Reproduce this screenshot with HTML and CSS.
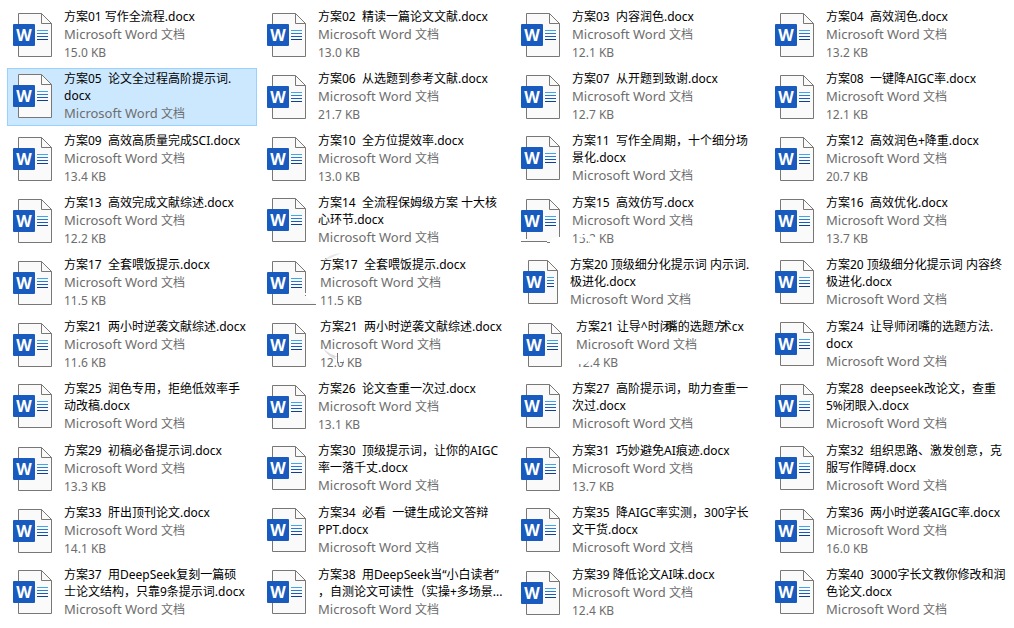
FILE: index.html
```html
<!DOCTYPE html>
<html lang="zh">
<head>
    <meta charset="UTF-8">
    <meta name="viewport" content="width=device-width, initial-scale=1.0">
    <title>方案文档</title>
    <link rel="stylesheet" href="styles.css">
</head>
<body>
    <!-- 图标定义 -->
    <svg class="defs" width="0" height="0" aria-hidden="true">
        <symbol id="mark" viewBox="0 0 40 46">
            <rect y="11" width="22" height="22" rx="1" fill="#185abd"/>
            <text class="letter" x="11" y="28" text-anchor="middle">W</text>
        </symbol>
        <symbol id="lines" viewBox="0 0 11 11">
            <path d="M0 .5H11" stroke="#41a5ee"/>
            <path d="M0 3.5H11" stroke="#2b7cd3"/>
            <path d="M0 6.5H11" stroke="#185abd"/>
            <path d="M0 9.5H11" stroke="#103f91"/>
        </symbol>
        <symbol id="word" viewBox="0 0 40 46">
            <path class="paper" d="M5.5 .5H28.5L38.5 10.5V43.5H5.5Z"/>
            <path class="fold" d="M28.5 .5V10.5H38.5"/>
            <use href="#lines" x="24" y="17" width="11" height="11"/>
            <use href="#mark" width="40" height="46"/>
        </symbol>
        <symbol id="word-narrow" viewBox="0 0 40 46">
            <path class="paper" d="M7.5 .5H26.5L36.5 10.5V43.5H7.5Z"/>
            <path class="fold" d="M26.5 .5V10.5H36.5"/>
            <path d="M26 17.5H33" stroke="#41a5ee"/>
            <path d="M26 20.5H33" stroke="#2b7cd3"/>
            <path d="M26 23.5H33" stroke="#185abd"/>
            <path d="M26 26.5H33" stroke="#103f91"/>
            <use href="#mark" x="2" width="40" height="46"/>
        </symbol>
        <symbol id="word-erased" viewBox="0 0 40 46">
            <path class="sheet" d="M5.5 .5H28.5L38.5 10.5V38Q32 37 29 42H5.5Z"/>
            <path class="fold" d="M5.5 40V.5H28.5L38.5 10.5V38M28.5 .5V10.5H38.5M0 42.5H26M26 43.5H29"/>
            <use href="#lines" x="24" y="17" width="11" height="11"/>
            <use href="#mark" width="40" height="46"/>
        </symbol>
        <symbol id="word-torn" viewBox="0 0 50 46">
            <path class="sheet" d="M5.5 .5H28.5L38.5 10.5V36L49 43H5.5Z"/>
            <path class="fold" d="M49 43.5H5.5V.5H28.5L38.5 10.5V32M38.5 34V35M28.5 .5V10.5H38.5"/>
            <use href="#lines" x="24" y="17" width="11" height="11"/>
            <use href="#mark" width="40" height="46"/>
        </symbol>
        <symbol id="word-shifted" viewBox="0 0 42 46">
            <path class="paper" d="M7.5 .5H30.5L40.5 10.5V43.5H7.5Z"/>
            <path class="fold" d="M30.5 .5V10.5H40.5"/>
            <use href="#lines" x="26" y="17" width="11" height="11"/>
            <use href="#mark" x="2" width="40" height="46"/>
        </symbol>
    </svg>

    <ul class="files">
        <li class="file"><svg class="icon"><use href="#word"/></svg><div class="info"><p class="name">方案01 写作全流程.docx</p><p class="meta"><span class="app">Microsoft Word</span> 文档</p><p class="meta">15.0 KB</p></div></li>
        <li class="file"><svg class="icon"><use href="#word"/></svg><div class="info"><p class="name">方案02  精读一篇论文文献.docx</p><p class="meta"><span class="app">Microsoft Word</span> 文档</p><p class="meta">13.0 KB</p></div></li>
        <li class="file"><svg class="icon"><use href="#word"/></svg><div class="info"><p class="name">方案03  内容润色.docx</p><p class="meta"><span class="app">Microsoft Word</span> 文档</p><p class="meta">12.1 KB</p></div></li>
        <li class="file"><svg class="icon"><use href="#word"/></svg><div class="info"><p class="name">方案04  高效润色.docx</p><p class="meta"><span class="app">Microsoft Word</span> 文档</p><p class="meta">13.2 KB</p></div></li>

        <li class="file two-line selected"><svg class="icon"><use href="#word"/></svg><div class="info"><p class="name">方案05  论文全过程高阶提示词.<br>docx</p><p class="meta"><span class="app">Microsoft Word</span> 文档</p></div></li>
        <li class="file"><svg class="icon"><use href="#word"/></svg><div class="info"><p class="name">方案06  从选题到参考文献.docx</p><p class="meta"><span class="app">Microsoft Word</span> 文档</p><p class="meta">21.7 KB</p></div></li>
        <li class="file"><svg class="icon"><use href="#word"/></svg><div class="info"><p class="name">方案07  从开题到致谢.docx</p><p class="meta"><span class="app">Microsoft Word</span> 文档</p><p class="meta">12.7 KB</p></div></li>
        <li class="file"><svg class="icon"><use href="#word"/></svg><div class="info"><p class="name">方案08  一键降AIGC率.docx</p><p class="meta"><span class="app">Microsoft Word</span> 文档</p><p class="meta">12.1 KB</p></div></li>

        <li class="file"><svg class="icon"><use href="#word"/></svg><div class="info"><p class="name">方案09  高效高质量完成SCI.docx</p><p class="meta"><span class="app">Microsoft Word</span> 文档</p><p class="meta">13.4 KB</p></div></li>
        <li class="file"><svg class="icon"><use href="#word"/></svg><div class="info"><p class="name">方案10  全方位提效率.docx</p><p class="meta"><span class="app">Microsoft Word</span> 文档</p><p class="meta">13.0 KB</p></div></li>
        <li class="file two-line"><svg class="icon"><use href="#word"/></svg><div class="info"><p class="name">方案11  写作全周期，十个细分场<br>景化.docx</p><p class="meta"><span class="app">Microsoft Word</span> 文档</p></div></li>
        <li class="file"><svg class="icon"><use href="#word"/></svg><div class="info"><p class="name">方案12  高效润色+降重.docx</p><p class="meta"><span class="app">Microsoft Word</span> 文档</p><p class="meta">20.7 KB</p></div></li>

        <li class="file"><svg class="icon"><use href="#word"/></svg><div class="info"><p class="name">方案13  高效完成文献综述.docx</p><p class="meta"><span class="app">Microsoft Word</span> 文档</p><p class="meta">12.2 KB</p></div></li>
        <li class="file two-line"><svg class="icon"><use href="#word"/></svg><div class="info"><p class="name">方案14  全流程保姆级方案 十大核<br>心环节.docx</p><p class="meta"><span class="app">Microsoft Word</span> 文档</p></div></li>
        <li class="file"><svg class="icon"><use href="#word-erased"/></svg><div class="info"><p class="name">方案15  高效仿写.docx</p><p class="meta"><span class="app">Microsoft Word</span> 文档</p><p class="meta">15.2 KB</p></div>
            <svg class="smudge" viewBox="0 0 250 58" aria-hidden="true"><path d="M62 45L66 41L70 44L67 46ZM75 45H82V53H75Z" fill="#fff"/></svg></li>
        <li class="file"><svg class="icon"><use href="#word"/></svg><div class="info"><p class="name">方案16  高效优化.docx</p><p class="meta"><span class="app">Microsoft Word</span> 文档</p><p class="meta">13.7 KB</p></div></li>

        <li class="file"><svg class="icon"><use href="#word"/></svg><div class="info"><p class="name">方案17  全套喂饭提示.docx</p><p class="meta"><span class="app">Microsoft Word</span> 文档</p><p class="meta">11.5 KB</p></div></li>
        <li class="file"><svg class="icon wide"><use href="#word-torn"/></svg><div class="info"><p class="name">方案17  全套喂饭提示.docx</p><p class="meta"><span class="app">Microsoft Word</span> 文档</p><p class="meta">11.5 KB</p></div>
            <svg class="smudge" viewBox="0 0 250 58" aria-hidden="true"><path d="M62 7Q69 0 80 -1L70 4Z" fill="#e6e6e6"/></svg></li>
        <li class="file two-line"><svg class="icon narrow"><use href="#word-narrow"/></svg><div class="info"><p class="name">方案20 顶级细分化提示词 内示词.<br>极进化.docx</p><p class="meta"><span class="app">Microsoft Word</span> 文档</p></div></li>
        <li class="file two-line"><svg class="icon"><use href="#word"/></svg><div class="info"><p class="name">方案20 顶级细分化提示词 内容终<br>极进化.docx</p><p class="meta"><span class="app">Microsoft Word</span> 文档</p></div></li>

        <li class="file"><svg class="icon"><use href="#word"/></svg><div class="info"><p class="name">方案21  两小时逆袭文献综述.docx</p><p class="meta"><span class="app">Microsoft Word</span> 文档</p><p class="meta">11.6 KB</p></div></li>
        <li class="file"><svg class="icon spaced"><use href="#word"/></svg><div class="info"><p class="name">方案21  两小时逆袭文献综述.docx</p><p class="meta"><span class="app">Microsoft Word</span> 文档</p><p class="meta">12.0 KB</p></div>
            <svg class="smudge" viewBox="0 0 250 58" aria-hidden="true"><path d="M62 32Q68 39 82 42L76 44Q66 40 62 32Z" fill="#ddd"/><path d="M74 41H82V46H76Z" fill="#fff"/><path d="M76.5 37V47M79 46.5H83" fill="none" stroke="#777"/></svg></li>
        <li class="file"><svg class="icon shifted"><use href="#word-shifted"/></svg><div class="info"><p class="name">方案21 让导^时闭<span class="over">嘴</span>的选题方<span class="over">术</span>cx</p><p class="meta"><span class="app">Microsoft Word</span> 文档</p><p class="meta">12.4 KB</p></div>
            <svg class="smudge" viewBox="0 0 250 58" aria-hidden="true"><path d="M60 37Q70 42 76 39V43L71 48H60ZM84 38H104V41H84ZM14 51H110V58H14Z" fill="#fff"/></svg></li>
        <li class="file two-line"><svg class="icon"><use href="#word"/></svg><div class="info"><p class="name">方案24  让导师闭嘴的选题方法.<br>docx</p><p class="meta"><span class="app">Microsoft Word</span> 文档</p></div></li>

        <li class="file two-line"><svg class="icon"><use href="#word"/></svg><div class="info"><p class="name">方案25  润色专用，拒绝低效率手<br>动改稿.docx</p><p class="meta"><span class="app">Microsoft Word</span> 文档</p></div></li>
        <li class="file"><svg class="icon"><use href="#word"/></svg><div class="info"><p class="name">方案26  论文查重一次过.docx</p><p class="meta"><span class="app">Microsoft Word</span> 文档</p><p class="meta">13.1 KB</p></div></li>
        <li class="file two-line"><svg class="icon"><use href="#word"/></svg><div class="info"><p class="name">方案27  高阶提示词，助力查重一<br>次过.docx</p><p class="meta"><span class="app">Microsoft Word</span> 文档</p></div></li>
        <li class="file two-line"><svg class="icon"><use href="#word"/></svg><div class="info"><p class="name">方案28  deepseek改论文，查重<br>5%闭眼入.docx</p><p class="meta"><span class="app">Microsoft Word</span> 文档</p></div></li>

        <li class="file"><svg class="icon"><use href="#word"/></svg><div class="info"><p class="name">方案29  初稿必备提示词.docx</p><p class="meta"><span class="app">Microsoft Word</span> 文档</p><p class="meta">13.3 KB</p></div></li>
        <li class="file two-line"><svg class="icon"><use href="#word"/></svg><div class="info"><p class="name">方案30  顶级提示词，让你的AIGC<br>率一落千丈.docx</p><p class="meta"><span class="app">Microsoft Word</span> 文档</p></div></li>
        <li class="file"><svg class="icon"><use href="#word"/></svg><div class="info"><p class="name">方案31  巧妙避免AI痕迹.docx</p><p class="meta"><span class="app">Microsoft Word</span> 文档</p><p class="meta">13.7 KB</p></div></li>
        <li class="file two-line"><svg class="icon"><use href="#word"/></svg><div class="info"><p class="name">方案32  组织思路、激发创意，克<br>服写作障碍.docx</p><p class="meta"><span class="app">Microsoft Word</span> 文档</p></div></li>

        <li class="file"><svg class="icon"><use href="#word"/></svg><div class="info"><p class="name">方案33  肝出顶刊论文.docx</p><p class="meta"><span class="app">Microsoft Word</span> 文档</p><p class="meta">14.1 KB</p></div></li>
        <li class="file two-line"><svg class="icon"><use href="#word"/></svg><div class="info"><p class="name">方案34  必看  一键生成论文答辩<br>PPT.docx</p><p class="meta"><span class="app">Microsoft Word</span> 文档</p></div></li>
        <li class="file two-line"><svg class="icon"><use href="#word"/></svg><div class="info"><p class="name">方案35  降AIGC率实测，300字长<br>文干货.docx</p><p class="meta"><span class="app">Microsoft Word</span> 文档</p></div></li>
        <li class="file"><svg class="icon"><use href="#word"/></svg><div class="info"><p class="name">方案36  两小时逆袭AIGC率.docx</p><p class="meta"><span class="app">Microsoft Word</span> 文档</p><p class="meta">16.0 KB</p></div></li>

        <li class="file two-line"><svg class="icon"><use href="#word"/></svg><div class="info"><p class="name">方案37  用DeepSeek复刻一篇硕<br>士论文结构，只靠9条提示词.docx</p><p class="meta"><span class="app">Microsoft Word</span> 文档</p></div></li>
        <li class="file two-line"><svg class="icon"><use href="#word"/></svg><div class="info"><p class="name">方案38  用DeepSeek当“小白读者”<br>，自测论文可读性（实操+多场景...</p><p class="meta"><span class="app">Microsoft Word</span> 文档</p></div></li>
        <li class="file"><svg class="icon"><use href="#word"/></svg><div class="info"><p class="name">方案39 降低论文AI味.docx</p><p class="meta"><span class="app">Microsoft Word</span> 文档</p><p class="meta">12.4 KB</p></div></li>
        <li class="file two-line"><svg class="icon"><use href="#word"/></svg><div class="info"><p class="name">方案40  3000字长文教你修改和润<br>色论文.docx</p><p class="meta"><span class="app">Microsoft Word</span> 文档</p></div></li>
    </ul>
</body>
</html>
```

FILE: styles.css
```css
* {
    margin: 0;
    padding: 0;
    box-sizing: border-box;
}

body {
    overflow-x: hidden;
    background: #fff;
    color: #000;
    font-family: "Noto Sans", "Noto Sans CJK SC", sans-serif;
    font-size: 12px;
}

.defs {
    position: absolute;
}

/* 文件列表 */
.files {
    display: grid;
    grid-template-columns: repeat(4, 1fr);
    gap: 4px;
    margin-right: -5px;
    padding: 6px 0 0 7px;
    list-style: none;
}

.file {
    position: relative;
    display: flex;
    gap: 11px;
    min-height: 58px;
    padding: 1px 0 0 5px;
    border: 1px solid transparent;
}

.selected {
    background: #cce8ff;
    border-color: #99d1ff;
}

/* 图标 */
.icon {
    flex: none;
    width: 40px;
    height: 46px;
    margin-top: 5px;
}

.two-line .icon {
    margin-top: 4px;
}

.icon.wide {
    width: 50px;
    margin-right: -8px;
}

.icon.spaced {
    margin-right: 2px;
}

.icon.narrow {
    margin-right: -2px;
}

.icon.shifted {
    width: 42px;
    margin-right: 2px;
}

.paper {
    fill: #fafafa;
    stroke: #797774;
}

.sheet {
    fill: #fafafa;
}

.fold {
    fill: none;
    stroke: #797774;
}

.letter {
    fill: #fff;
    font-size: 16px;
    font-weight: 700;
}

/* 文字 */
.name {
    line-height: 17px;
    white-space: pre;
}

.meta {
    color: #6d6d6d;
    line-height: 18px;
}

.app {
    font-size: 13px;
}

.over {
    margin-left: -6px;
}

.smudge {
    position: absolute;
    top: -1px;
    left: -1px;
    width: 250px;
    height: 58px;
    overflow: visible;
    pointer-events: none;
}
```
